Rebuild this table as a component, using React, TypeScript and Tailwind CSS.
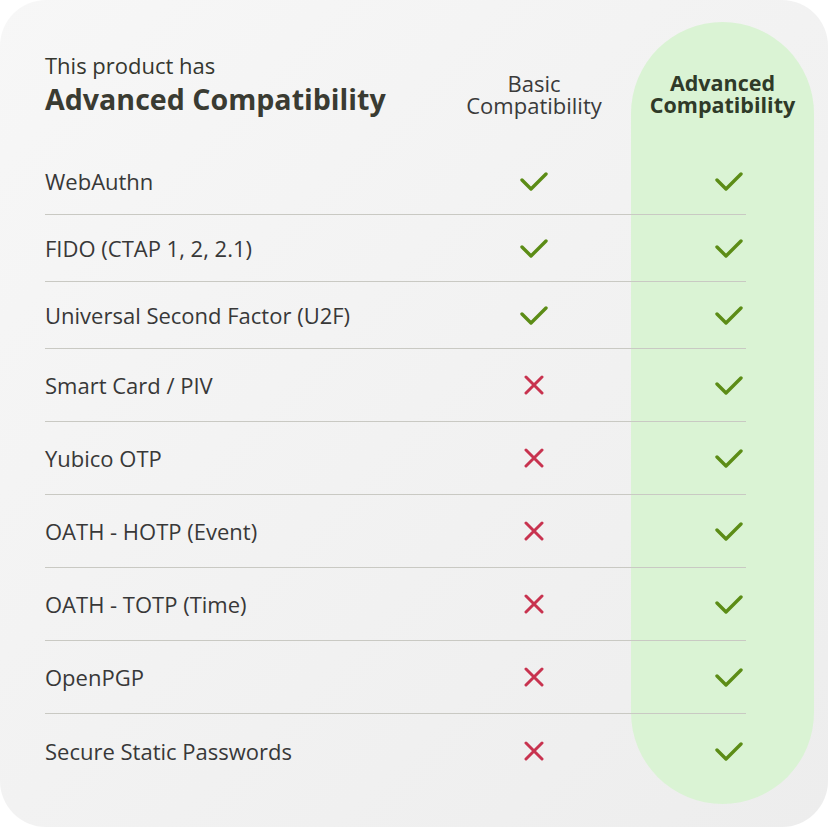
import React from 'react';

// Feature rows: label, whether basic supports it, row height
const rows: { label: string; basic: boolean; h: string }[] = [
  { label: 'WebAuthn', basic: true, h: 'h-[67px]' },
  { label: 'FIDO (CTAP 1, 2, 2.1)', basic: true, h: 'h-[67px]' },
  { label: 'Universal Second Factor (U2F)', basic: true, h: 'h-[67px]' },
  { label: 'Smart Card / PIV', basic: false, h: 'h-[73px]' },
  { label: 'Yubico OTP', basic: false, h: 'h-[73px]' },
  { label: 'OATH - HOTP (Event)', basic: false, h: 'h-[73px]' },
  { label: 'OATH - TOTP (Time)', basic: false, h: 'h-[73px]' },
  { label: 'OpenPGP', basic: false, h: 'h-[73px]' },
  { label: 'Secure Static Passwords', basic: false, h: 'h-[73px]' },
];

function Check() {
  return (
    <svg width="28" height="20" viewBox="0 0 28 20" fill="none">
      <polyline
        points="2,9 11,18 26,3"
        stroke="#5c8c16"
        strokeWidth="3.4"
        strokeLinecap="round"
        strokeLinejoin="round"
      />
    </svg>
  );
}

function Cross() {
  return (
    <svg width="20" height="20" viewBox="0 0 20 20" fill="none">
      <path d="M2 2 L18 18 M18 2 L2 18" stroke="#c8334f" strokeWidth="3" strokeLinecap="round" />
    </svg>
  );
}

export default function App() {
  return (
    <div className="w-[828px] h-[827px] bg-white" style={{ fontFamily: '"Open Sans", "Noto Sans", sans-serif' }}>
      <div className="relative w-full h-full rounded-[46px] bg-gradient-to-br from-[#f7f7f7] to-[#ededed] overflow-hidden">
        {/* highlighted column */}
        <div className="absolute left-[631px] top-[22px] w-[183px] h-[782px] rounded-full bg-[#daf3d4]" />

        <div className="relative pl-[45px] pt-[51px]">
          {/* Header */}
          <div className="grid grid-cols-[409px_160px_17px_183px] h-[97px]">
            <div className="text-[#35372f]">
              <p className="text-[22px] leading-[28px]">This product has</p>
              <p className="text-[28.6px] leading-[40px] font-bold text-[#3a3b32]">Advanced Compatibility</p>
            </div>
            <div className="pt-[21px] flex flex-col items-center text-[22px] leading-[22px] text-[#3a3a3a]">
              <span>Basic</span>
              <span>Compatibility</span>
            </div>
            <div />
            <div className="pt-[21px] flex flex-col items-center text-[21.5px] leading-[22px] font-bold text-[#2f3a28]">
              <span>Advanced</span>
              <span>Compatibility</span>
            </div>
          </div>

          {/* Rows */}
          <div className="w-[701px]">
            {rows.map((r, i) => (
              <div
                key={r.label}
                className={`grid grid-cols-[1fr_100px_128px_34px] items-center ${r.h} ${
                  i < rows.length - 1 ? 'border-b border-[#c9c9c3]' : ''
                }`}
              >
                <span className="text-[22px] leading-[30px] text-[#383838]">{r.label}</span>
                <span className="flex justify-center">{r.basic ? <Check /> : <Cross />}</span>
                <span />
                <span className="flex justify-center">
                  <Check />
                </span>
              </div>
            ))}
          </div>
        </div>
      </div>
    </div>
  );
}
